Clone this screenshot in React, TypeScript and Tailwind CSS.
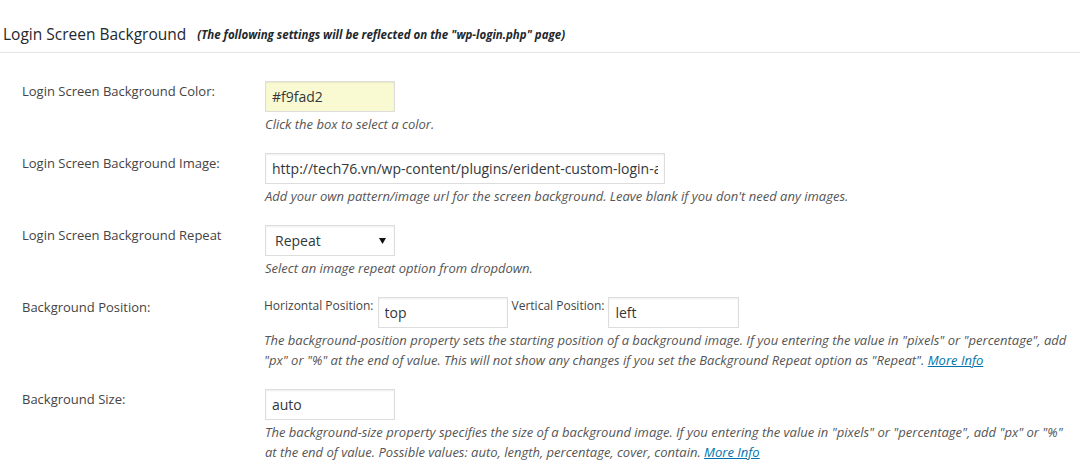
import React from "react";

const font = "font-['Open_Sans',sans-serif]";

const Label = ({ children }: { children: React.ReactNode }) => (
  <div className="w-[243px] shrink-0 pl-[22px] text-[13px] leading-[20px] text-[#444]">
    {children}
  </div>
);

const Desc = ({ children }: { children: React.ReactNode }) => (
  <p className="mt-[2px] text-[13px] leading-[20px] italic text-[#555]">{children}</p>
);

const inputCls =
  "h-[31px] border border-[#ddd] px-[6px] text-[14px] text-[#32373c] shadow-[inset_0_1px_2px_rgba(0,0,0,0.07)] outline-none";

const MoreInfo = () => (
  <a href="#" className="text-[#0073aa] underline">
    More Info
  </a>
);

export default function App() {
  return (
    <div className={`${font} min-h-screen w-[1080px] bg-white`}>
      {/* section heading */}
      <div className="flex h-[53px] items-end border-b border-[#e5e5e5] pb-[7px] pl-[3px]">
        <h3 className="text-[15.5px] leading-[22px] text-[#23282d]">Login Screen Background</h3>
        <span className="ml-[11px] mb-[2px] text-[11.5px] leading-[16px] font-bold italic text-[#23282d]">
          (The following settings will be reflected on the "wp-login.php" page)
        </span>
      </div>

      <div className="pt-[18px]">
        {/* color */}
        <div className="flex pt-[10px] pb-[9px]">
          <Label>Login Screen Background Color:</Label>
          <div className="flex-1 pl-[22px] pr-[8px]">
            <input
              readOnly
              value="#f9fad2"
              className={`${inputCls} w-[130px] bg-[#f9fad2]`}
            />
            <Desc>Click the box to select a color.</Desc>
          </div>
        </div>

        {/* image */}
        <div className="flex pt-[10px] pb-[9px]">
          <Label>Login Screen Background Image:</Label>
          <div className="flex-1 pl-[22px] pr-[8px]">
            <input
              readOnly
              value="http://tech76.vn/wp-content/plugins/erident-custom-login-and-dashboard/images/bg.png"
              className={`${inputCls} w-[400px] bg-white`}
            />
            <Desc>
              Add your own pattern/image url for the screen background. Leave blank if you don't
              need any images.
            </Desc>
          </div>
        </div>

        {/* repeat */}
        <div className="flex pt-[10px] pb-[9px]">
          <Label>Login Screen Background Repeat</Label>
          <div className="flex-1 pl-[22px] pr-[8px]">
            <div className="relative w-[130px]">
              <select
                defaultValue="repeat"
                className="h-[31px] w-[130px] appearance-none border border-[#ddd] bg-white pl-[9px] text-[14px] text-[#32373c] shadow-[inset_0_1px_2px_rgba(0,0,0,0.07)] outline-none"
              >
                <option value="no-repeat">No Repeat</option>
                <option value="repeat">Repeat</option>
                <option value="repeat-x">Repeat-X</option>
                <option value="repeat-y">Repeat-Y</option>
              </select>
              <svg
                className="pointer-events-none absolute right-[9px] top-[13px]"
                width="7"
                height="6"
                viewBox="0 0 7 6"
              >
                <path d="M0 0H7L3.5 6Z" fill="#111" />
              </svg>
            </div>
            <Desc>Select an image repeat option from dropdown.</Desc>
          </div>
        </div>

        {/* position */}
        <div className="flex pt-[10px] pb-[9px]">
          <Label>Background Position:</Label>
          <div className="flex-1 pl-[21px] pr-[8px]">
            <div className="flex items-start">
              <span className="text-[12px] leading-[18px] text-[#444]">Horizontal Position:</span>
              <input readOnly value="top" className={`${inputCls} ml-[4px] w-[130px] bg-white`} />
              <span className="ml-[4px] text-[12px] leading-[18px] text-[#444]">Vertical Position:</span>
              <input readOnly value="left" className={`${inputCls} ml-[4px] w-[131px] bg-white`} />
            </div>
            <Desc>
              The background-position property sets the starting position of a background image. If
              you entering the value in "pixels" or "percentage", add "px" or "%" at the end of value.
              This will not show any changes if you set the Background Repeat option as "Repeat".{" "}
              <MoreInfo />
            </Desc>
          </div>
        </div>

        {/* size */}
        <div className="flex pt-[10px] pb-[9px]">
          <Label>Background Size:</Label>
          <div className="flex-1 pl-[22px] pr-[8px]">
            <input readOnly value="auto" className={`${inputCls} w-[130px] bg-white`} />
            <Desc>
              The background-size property specifies the size of a background image. If you entering
              the value in "pixels" or "percentage", add "px" or "%" at the end of value. Possible
              values: auto, length, percentage, cover, contain. <MoreInfo />
            </Desc>
          </div>
        </div>
      </div>
    </div>
  );
}
